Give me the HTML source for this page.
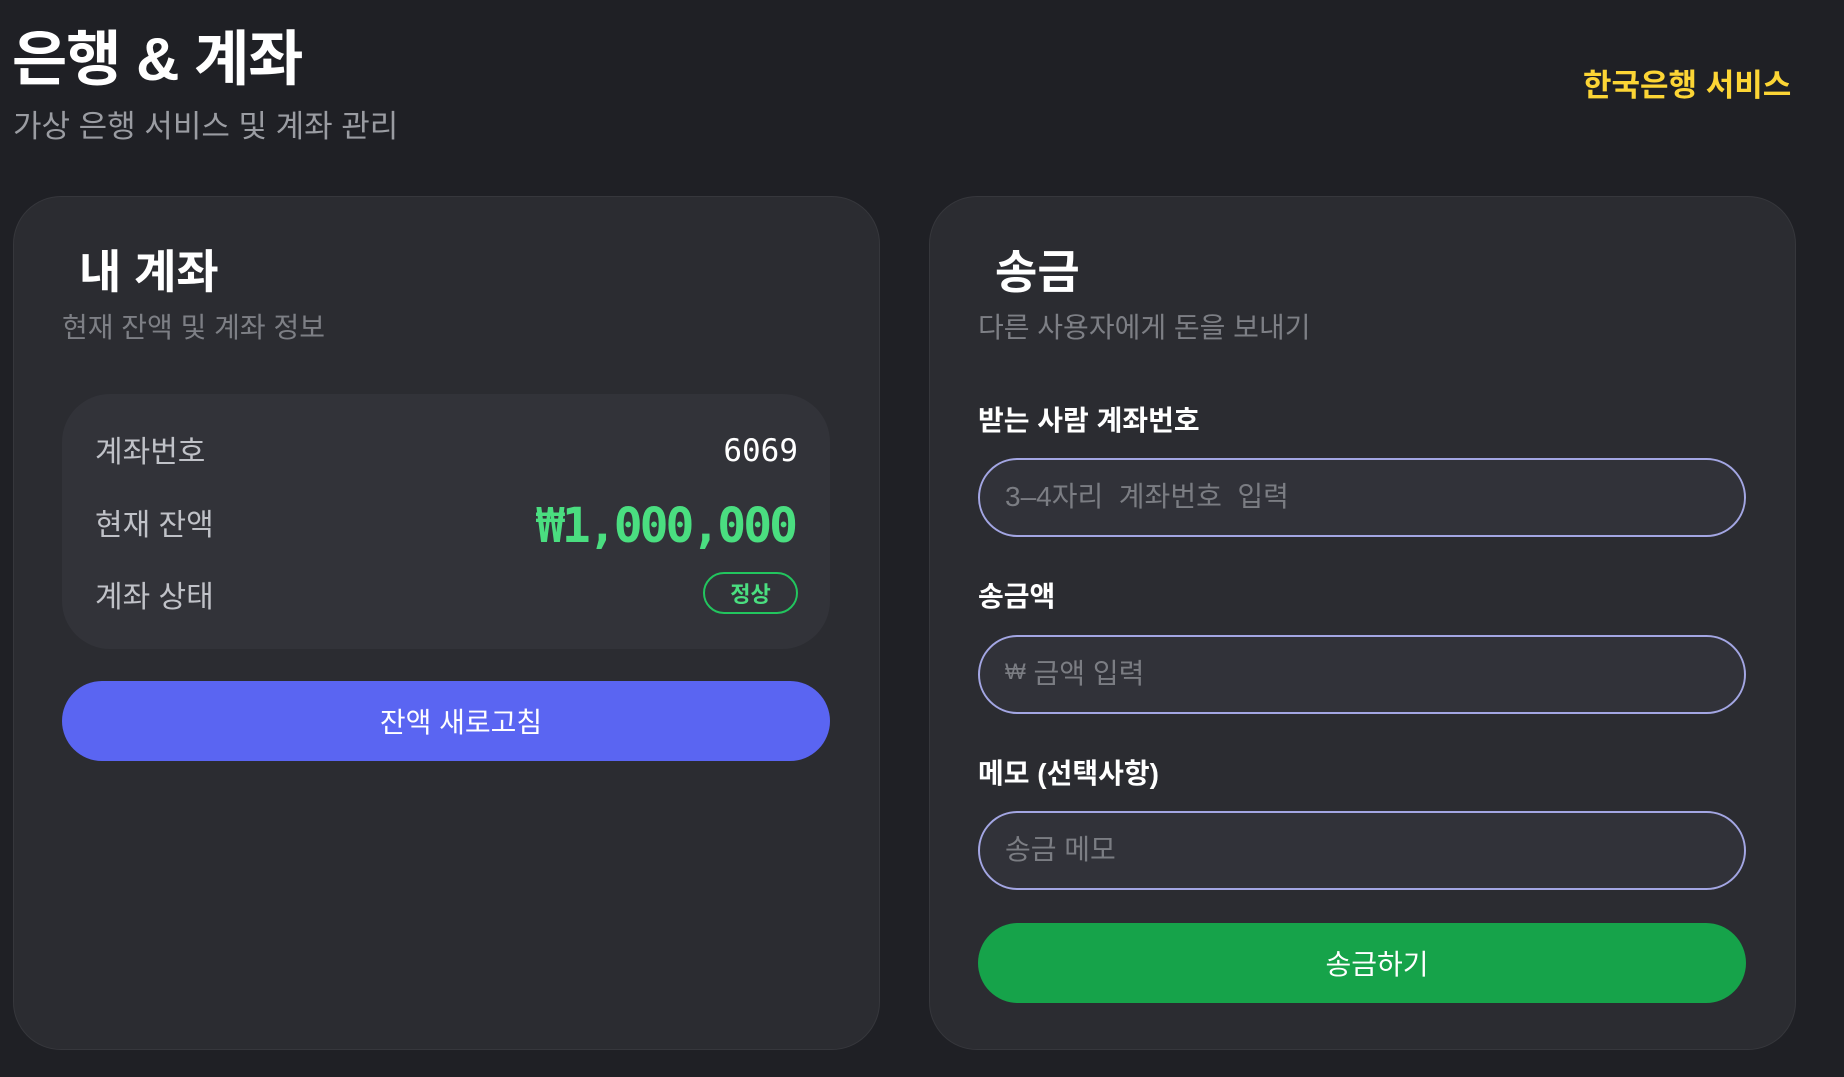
<!DOCTYPE html>
<html><head><meta charset="utf-8"><style>
*{margin:0;padding:0;box-sizing:border-box}
body{width:1844px;height:1077px;background:#1f2025;font-family:"Liberation Sans","Noto Sans CJK KR",sans-serif;position:relative;overflow:hidden;color:#fff}
.a{position:absolute;white-space:nowrap;line-height:1}
.card{position:absolute;top:196px;width:867px;height:854px;background:#2b2c31;border:1.5px solid #36373c;border-radius:48px}
.mono{font-family:"DejaVu Sans Mono","Liberation Mono",monospace}
.inp{position:absolute;left:48px;width:768px;height:79px;border:2px solid #a3a6e3;border-radius:40px;background:#313239;color:#7b7d83;font-size:28px;padding-left:25px;padding-bottom:6px;display:flex;align-items:center}
.lbl{position:absolute;left:48px;font-size:28px;font-weight:bold;color:#fff}
.btn{position:absolute;left:48px;width:768px;height:80px;border-radius:40px;display:flex;align-items:center;justify-content:center;font-size:28px;padding-left:30px}
</style></head><body>
<div class="a" style="left:12px;top:30px;font-size:60px;font-weight:bold;letter-spacing:-1px">은행 &amp; 계좌</div>
<div class="a" style="left:13px;top:111px;font-size:31px;color:#9a9ca2">가상 은행 서비스 및 계좌 관리</div>
<div class="a" style="left:1583px;top:70px;font-size:31px;font-weight:bold;color:#fcd535">한국은행 서비스</div>

<div class="card" style="left:13px">
  <div class="a" style="left:65px;top:52px;font-size:46px;font-weight:bold">내 계좌</div>
  <div class="a" style="left:48px;top:117px;font-size:28px;color:#7d7f85">현재 잔액 및 계좌 정보</div>
  <div style="position:absolute;left:48px;top:197px;width:768px;height:255px;background:#323339;border-radius:48px">
    <div class="a" style="left:33px;top:44px;font-size:30px;color:#c0c2c8">계좌번호</div>
    <div class="a mono" style="right:32px;top:42px;font-size:31px;color:#fff">6069</div>
    <div class="a" style="left:33px;top:117px;font-size:30px;color:#c0c2c8">현재 잔액</div>
    <div class="a mono" style="right:35px;top:108px;font-size:48px;font-weight:bold;color:#4ade80;letter-spacing:-3px">₩1,000,000</div>
    <div class="a" style="left:33px;top:189px;font-size:30px;color:#c0c2c8">계좌 상태</div>
    <div style="position:absolute;right:32px;top:178px;width:95px;height:42px;border:2px solid #22c55e;border-radius:21px;color:#4ade80;font-size:22px;font-weight:bold;display:flex;align-items:center;justify-content:center">정상</div>
  </div>
  <div class="btn" style="top:484px;background:#5a65f2">잔액 새로고침</div>
</div>

<div class="card" style="left:929px">
  <div class="a" style="left:65px;top:52px;font-size:46px;font-weight:bold">송금</div>
  <div class="a" style="left:48px;top:117px;font-size:28px;color:#7d7f85">다른 사용자에게 돈을 보내기</div>
  <div class="a lbl" style="top:210px">받는 사람 계좌번호</div>
  <div class="inp" style="top:261px">3–4자리 &nbsp;계좌번호 &nbsp;입력</div>
  <div class="a lbl" style="top:386px">송금액</div>
  <div class="inp" style="top:438px"><span style="font-size:22px">₩</span>&nbsp;금액 입력</div>
  <div class="a lbl" style="top:563px">메모 (선택사항)</div>
  <div class="inp" style="top:614px">송금 메모</div>
  <div class="btn" style="top:726px;background:#16a34a">송금하기</div>
</div>
</body></html>
